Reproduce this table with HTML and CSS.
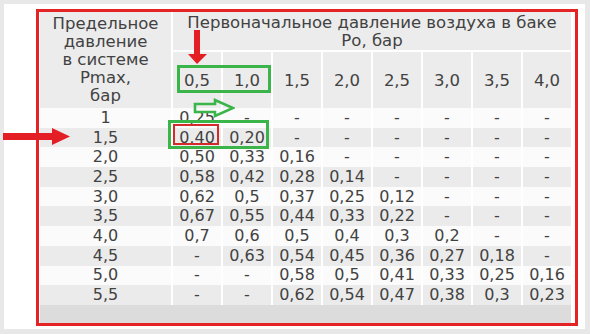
FILE: index.html
```html
<!DOCTYPE html>
<html lang="ru">
<head>
<meta charset="utf-8">
<title>Таблица давления</title>
<link rel="stylesheet" href="styles.css">
</head>
<body>
<div class="page">
  <div class="frame">
    <table class="grid">
      <tr class="h1">
        <th rowspan="2" class="corner">Предельное<br>давление<br>в системе<br>Pmax,<br>бар</th>
        <th colspan="8" class="title">Первоначальное давление воздуха в баке<br>Ро, бар</th>
      </tr>
      <tr class="h2">
        <th>0,5</th><th>1,0</th><th>1,5</th><th>2,0</th><th>2,5</th><th>3,0</th><th>3,5</th><th>4,0</th>
      </tr>
      <tr class="w"><td>1</td><td>0,25</td><td>-</td><td>-</td><td>-</td><td>-</td><td>-</td><td>-</td><td>-</td></tr>
      <tr class="g"><td>1,5</td><td>0,40</td><td>0,20</td><td>-</td><td>-</td><td>-</td><td>-</td><td>-</td><td>-</td></tr>
      <tr class="w"><td>2,0</td><td>0,50</td><td>0,33</td><td>0,16</td><td>-</td><td>-</td><td>-</td><td>-</td><td>-</td></tr>
      <tr class="g"><td>2,5</td><td>0,58</td><td>0,42</td><td>0,28</td><td>0,14</td><td>-</td><td>-</td><td>-</td><td>-</td></tr>
      <tr class="w"><td>3,0</td><td>0,62</td><td>0,5</td><td>0,37</td><td>0,25</td><td>0,12</td><td>-</td><td>-</td><td>-</td></tr>
      <tr class="g"><td>3,5</td><td>0,67</td><td>0,55</td><td>0,44</td><td>0,33</td><td>0,22</td><td>-</td><td>-</td><td>-</td></tr>
      <tr class="w"><td>4,0</td><td>0,7</td><td>0,6</td><td>0,5</td><td>0,4</td><td>0,3</td><td>0,2</td><td>-</td><td>-</td></tr>
      <tr class="g"><td>4,5</td><td>-</td><td>0,63</td><td>0,54</td><td>0,45</td><td>0,36</td><td>0,27</td><td>0,18</td><td>-</td></tr>
      <tr class="w"><td>5,0</td><td>-</td><td>-</td><td>0,58</td><td>0,5</td><td>0,41</td><td>0,33</td><td>0,25</td><td>0,16</td></tr>
      <tr class="g"><td>5,5</td><td>-</td><td>-</td><td>0,62</td><td>0,54</td><td>0,47</td><td>0,38</td><td>0,3</td><td>0,23</td></tr>
      <tr class="foot"><td colspan="9"></td></tr>
    </table>
  </div>

  <svg class="arrow-down" width="22" height="36" viewBox="0 0 22 36"><polygon points="8,1 14,1 14,25 21,25 11,35 2,25 8,25" fill="#e31e24"/></svg>
  <div class="box-green box-head"></div>
  <svg class="arrow-hollow" width="42" height="20" viewBox="0 0 42 20"><polygon points="2,6 22,6 22,2 40,10 22,18 22,14 2,14" fill="none" stroke="#3bb54a" stroke-width="2.6" stroke-linejoin="miter"/></svg>
  <div class="box-green box-row"></div>
  <div class="box-red"></div>
  <svg class="arrow-right" width="68" height="19" viewBox="0 0 68 19"><polygon points="0,6 49,6 49,1 67,9.5 49,18 49,13 0,13" fill="#e31e24"/></svg>
</div>
</body>
</html>
```

FILE: styles.css
```css
html, body {
  margin: 0;
  padding: 0;
  background: #e8e8e8;
}

.page {
  position: relative;
  margin: 4px;
  width: 581px;
  height: 325px;
  background: #ffffff;
  padding: 5px 0 0 32px;
  box-sizing: border-box;
  font-family: "DejaVu Sans", Verdana, sans-serif;
  color: #424242;
}

.frame {
  width: 542px;
  height: 317px;
  box-sizing: border-box;
  border: 3px solid #e42424;
  background: #ffffff;
}

.grid {
  border-collapse: separate;
  border-spacing: 2px 0;
  margin-left: -1px;
  font-size: 16px;
  line-height: 18px;
}

.grid th, .grid td {
  padding: 0;
  text-align: center;
  font-weight: normal;
  white-space: nowrap;
}

.grid th {
  background: #ececec;
  font-size: 16.5px;
}

.corner {
  width: 131px;
  height: 94px;
  vertical-align: middle;
}

.h1 .title {
  height: 39px;
  padding-top: 2px;
  border-bottom: 2px solid #ffffff;
  box-sizing: border-box;
  vertical-align: middle;
}

.h2 th {
  width: 48px;
  height: 55px;
  padding-top: 1px;
}

.grid td {
  height: 19.7px;
}

.w td {
  background: #fbfbfb;
}

.g td {
  background: #ebebeb;
}

.foot td {
  height: 18px;
  background: #dcdcdc;
}

.arrow-down {
  position: absolute;
  left: 182px;
  top: 25px;
}

.arrow-hollow {
  position: absolute;
  left: 189px;
  top: 94px;
}

.arrow-right {
  position: absolute;
  left: -1px;
  top: 123px;
}

.box-green {
  position: absolute;
  border: 3px solid #3bb54a;
  box-sizing: border-box;
}

.box-head {
  left: 173px;
  top: 61px;
  width: 94px;
  height: 28px;
}

.box-row {
  left: 164px;
  top: 116px;
  width: 101px;
  height: 29px;
}

.box-red {
  position: absolute;
  left: 169px;
  top: 120px;
  width: 46px;
  height: 21px;
  border: 2px solid #d42a2a;
  box-sizing: border-box;
}
```
